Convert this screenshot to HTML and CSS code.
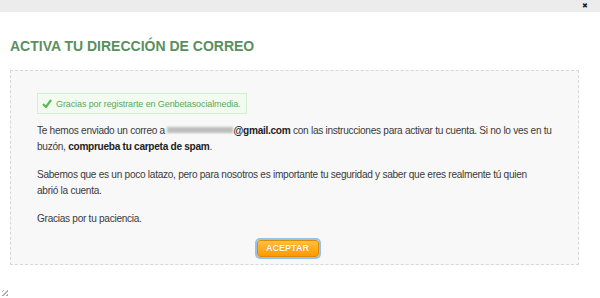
FILE: index.html
```html
<!DOCTYPE html>
<html lang="es">
<head>
    <meta charset="UTF-8">
    <title>Activa tu dirección de correo</title>
    <link rel="stylesheet" href="styles.css">
</head>
<body>
    <div class="topbar">
        <span class="close">&#x2716;</span>
    </div>
    <div class="dialog">
        <h1>ACTIVA TU DIRECCIÓN DE CORREO</h1>
        <div class="box">
            <div class="notice">
                <svg class="check" width="10" height="9" viewBox="0 0 10 9">
                    <path d="M1 5 L4 8 L9 1" fill="none" stroke="#5cb85c" stroke-width="2.2"/>
                </svg>
                Gracias por registrarte en Genbetasocialmedia.
            </div>
            <p>Te hemos enviado un correo a <span class="blur"></span><b>@gmail.com</b> con las instrucciones para activar tu cuenta. Si no lo ves en tu buzón, <b>comprueba tu carpeta de spam</b>.</p>
            <p class="narrow">Sabemos que es un poco latazo, pero para nosotros es importante tu seguridad y saber que eres realmente tú quien abrió la cuenta.</p>
            <p>Gracias por tu paciencia.</p>
            <div class="actions">
                <button>ACEPTAR</button>
            </div>
        </div>
    </div>
    <div class="grip"></div>
</body>
</html>
```

FILE: styles.css
```css
body {
    margin: 0;
    font-family: "Liberation Sans", Arial, sans-serif;
    background: #fff;
    color: #333;
    height: 298px;
    position: relative;
    overflow: hidden;
}
.topbar {
    height: 12px;
    background: #ececec;
    display: flex;
    justify-content: flex-end;
    align-items: flex-start;
    padding-right: 12px;
}
.close {
    font-size: 7px;
    color: #222;
    line-height: 10px;
    margin-top: 1px;
}
.dialog {
    padding: 25px 21px 0 10px;
}
h1 {
    margin: 0 0 15px;
    font-size: 14px;
    color: #5a8f5e;
    font-weight: bold;
    line-height: 18px;
}
.box {
    border: 1px dashed #d8d8d8;
    background: #f8f8f8;
    padding: 22px 18px 7px 26px;
}
.notice {
    display: inline-flex;
    align-items: center;
    gap: 4px;
    border: 1px solid #d5edd3;
    background: #f2fbf0;
    color: #5aa95a;
    font-size: 9px;
    letter-spacing: -0.1px;
    height: 19px;
    padding: 0 5px 0 4px;
    margin-bottom: 9px;
}
p {
    margin: 0 0 13px;
    font-size: 10.1px;
    letter-spacing: -0.28px;
    line-height: 15.5px;
    color: #3a3a3a;
}
p.narrow {
    margin-right: 30px;
}
b {
    color: #222;
}
.blur {
    display: inline-block;
    width: 66px;
    height: 6px;
    background: #bdbdbd;
    vertical-align: 1px;
    filter: blur(1px);
}
.actions {
    display: flex;
    justify-content: center;
    margin: 13px 22px 0 0;
}
button {
    font-family: "Liberation Sans", Arial, sans-serif;
    font-size: 9px;
    font-weight: bold;
    color: #fff;
    height: 17px;
    width: 62px;
    border: 1px solid #e08a00;
    border-radius: 3px;
    background: linear-gradient(#ffc040, #ff9a00);
    box-shadow: 0 0 0 2px #94c2ec;
    text-shadow: 0 0 1px #d07000;
}
.grip {
    position: absolute;
    left: 2px;
    bottom: 2px;
    width: 6px;
    height: 6px;
    background: repeating-linear-gradient(135deg, transparent 0 1px, #aaa 1px 2px, transparent 2px 3px);
}
```
